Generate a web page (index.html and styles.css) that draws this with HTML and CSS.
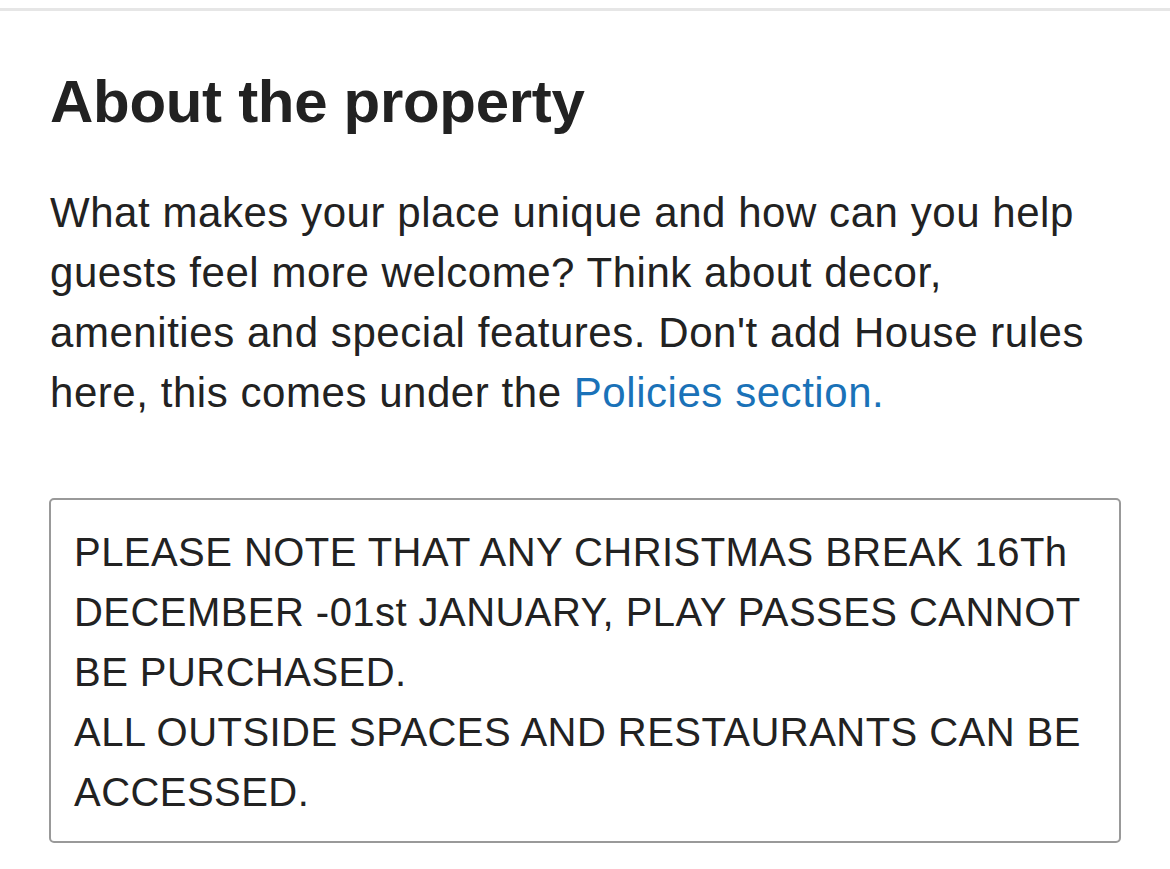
FILE: index.html
```html
<!DOCTYPE html>
<html lang="en">
<head>
    <meta charset="UTF-8">
    <meta name="viewport" content="width=device-width, initial-scale=1.0">
    <title>About the property</title>
    <link rel="stylesheet" href="styles.css">
</head>
<body>
    <div class="top-rule"></div>

    <section class="about">
        <h1 class="about-title">About the property</h1>

        <p class="about-hint">
            What makes your place unique and how can you help guests feel more welcome? Think about decor,
            amenities and special features. Don't add House rules here, this comes under the
            <a href="#" class="link">Policies section.</a>
        </p>

        <!-- description entered by the host -->
        <div class="about-box">
            <div class="about-text">PLEASE NOTE THAT ANY CHRISTMAS BREAK 16Th DECEMBER -01st JANUARY, PLAY PASSES CANNOT BE PURCHASED.</div>
            <div class="about-text">ALL OUTSIDE SPACES AND RESTAURANTS CAN BE ACCESSED.</div>
        </div>
    </section>
</body>
</html>
```

FILE: styles.css
```css
body {
    margin: 0;
    background-color: #fff;
    color: #222;
    font-family: "Liberation Sans", Arial, sans-serif;
}
.top-rule {
    margin-top: 8px;
    height: 3px;
    background-color: #e6e6e6;
}
.about {
    padding: 0 49px 0 49px;
}
.about-title {
    margin: 56px 0 0 1px;
    font-size: 60px;
    line-height: 69px;
    font-weight: bold;
    letter-spacing: -0.3px;
    color: #222;
}
.about-hint {
    margin: 47px 0 0 1px;
    font-size: 42px;
    line-height: 60px;
    letter-spacing: 0.55px;
    color: #222;
}
.link {
    color: #1a72b8;
    text-decoration: none;
}
.about-box {
    margin-top: 75px;
    border: 2px solid #999;
    border-radius: 5px;
    padding: 22px 20px 19px 23px;
}
.about-text {
    font-size: 40px;
    line-height: 60px;
    letter-spacing: 0.45px;
    color: #222;
}
```
